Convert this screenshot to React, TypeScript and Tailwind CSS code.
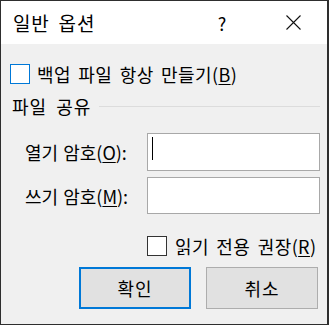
import React from 'react';

const font = { fontFamily: '"Noto Sans CJK KR", "Noto Sans", sans-serif' };

const Hotkey: React.FC<{ k: string }> = ({ k }) => (
  <span>
    (<span className="underline underline-offset-2">{k}</span>)
  </span>
);

const PasswordRow: React.FC<{ label: string; k: string; caret?: boolean; className?: string }> = ({
  label,
  k,
  caret,
  className,
}) => (
  <div className={`flex items-center ${className || ''}`}>
    <div className="w-[146px] pl-[24px] text-[18px] leading-none [word-spacing:1px]">
      {label}
      <Hotkey k={k} />:
    </div>
    <div className="w-[173px] h-full border border-[#a8a8a8] bg-white pl-[4px] pt-[3px]">
      {caret && <div className="w-px h-[23px] bg-black" />}
    </div>
  </div>
);

export default function App() {
  return (
    <div
      className="w-[329px] h-[325px] border border-r-2 border-[#2e2e2e] bg-[#f0f0f0] flex flex-col text-black"
      style={font}
    >
      <div className="h-[43px] bg-white flex items-center shrink-0">
        <div className="pl-[12px] text-[19px] leading-none flex-1 tracking-[0.8px] [word-spacing:4px]">
          일반 옵션
        </div>
        <div className="w-[12px] text-[18px] leading-none mr-[58px] text-center">?</div>
        <svg width="15" height="15" viewBox="0 0 15 15" className="mr-[26px]">
          <path d="M0.5 0.5 L14.5 14.5 M14.5 0.5 L0.5 14.5" stroke="#111" strokeWidth="1.1" />
        </svg>
      </div>

      <div className="mt-[20px] h-[20px] flex items-center pl-[9px]">
        <div className="w-[20px] h-[20px] border border-[#0078d7] bg-white shrink-0" />
        <div className="ml-[7px] text-[18px] leading-none tracking-[0.4px] [word-spacing:3px]">
          백업 파일 항상 만들기<Hotkey k="B" />
        </div>
      </div>

      <div className="mt-[12px] h-[20px] flex items-center pl-[11px] pr-[7px]">
        <div className="text-[18px] leading-none tracking-[1px] [word-spacing:4px]">파일 공유</div>
        <div className="flex-1 h-px bg-[#dcdcdc] ml-[8px]" />
      </div>

      <PasswordRow label="열기 암호" k="O" caret className="mt-[17px] h-[38px]" />
      <PasswordRow label="쓰기 암호" k="M" className="mt-[6px] h-[37px]" />

      <div className="mt-[22px] h-[20px] flex items-center pl-[146px]">
        <div className="w-[20px] h-[20px] border border-[#333] bg-white shrink-0" />
        <div className="ml-[8px] text-[18px] leading-none tracking-[0.4px] [word-spacing:3px]">
          읽기 전용 권장<Hotkey k="R" />
        </div>
      </div>

      <div className="mt-[11px] h-[42px] flex pl-[78px] gap-[15px]">
        <button className="w-[112px] h-full border-2 border-[#0078d7] bg-[#e1e1e1] text-[18px] leading-none tracking-[1px]">
          확인
        </button>
        <button className="w-[112px] h-full border border-[#adadad] bg-[#e1e1e1] text-[18px] leading-none tracking-[1px]">
          취소
        </button>
      </div>
    </div>
  );
}
